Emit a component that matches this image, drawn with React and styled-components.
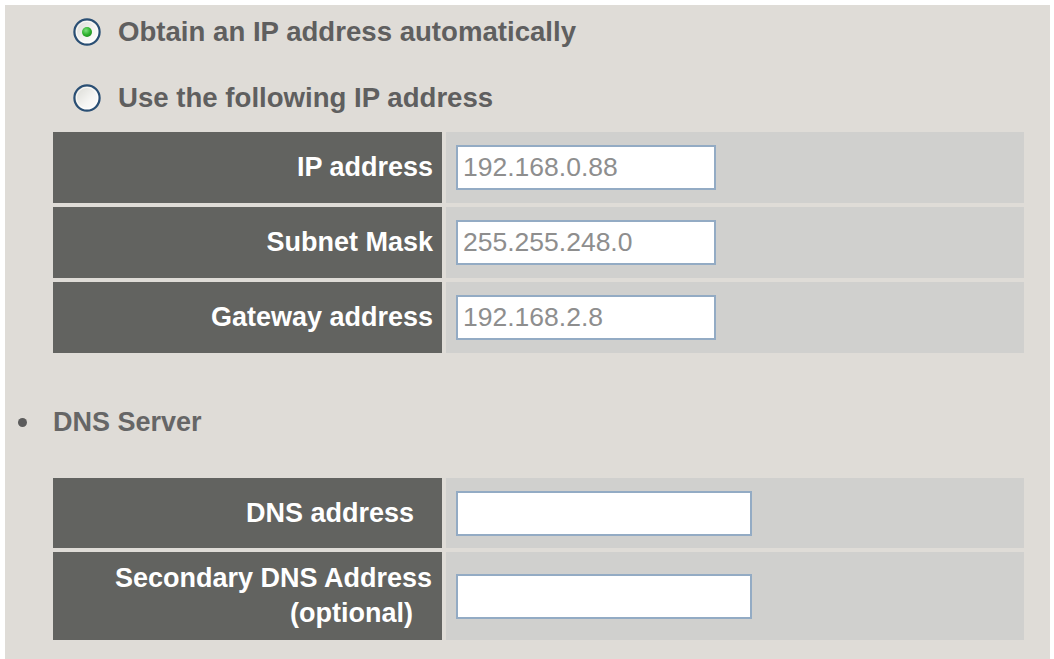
import styled, { createGlobalStyle } from 'styled-components';

const GlobalStyle = createGlobalStyle`
  html, body {
    margin: 0;
    padding: 0;
    background: #ffffff;
  }
  body {
    font-family: "Liberation Sans", Arial, sans-serif;
  }
`;

/** 라디오 버튼 (XP 스타일)
 * @params (bool)checked - 선택 여부
 */
function Radio({ checked }) {
  return (
    <SRadio width="28" height="28" viewBox="0 0 28 28">
      <defs>
        <linearGradient id="radioFace" x1="0" y1="0" x2="1" y2="1">
          <stop offset="0" stopColor="#d8d8d2" />
          <stop offset="0.6" stopColor="#f6f6f4" />
          <stop offset="1" stopColor="#ffffff" />
        </linearGradient>
        <radialGradient id="radioDot" cx="0.4" cy="0.35" r="0.7">
          <stop offset="0" stopColor="#7fe07f" />
          <stop offset="0.6" stopColor="#2fb32f" />
          <stop offset="1" stopColor="#1f8a1f" />
        </radialGradient>
      </defs>
      <circle cx="14" cy="14" r="12.6" fill="url(#radioFace)" stroke="#2a4f74" strokeWidth="2.2" />
      <circle cx="14" cy="14" r="10.6" fill="none" stroke="#ffffff" strokeWidth="1" opacity="0.8" />
      {checked && <circle cx="14" cy="14" r="5" fill="url(#radioDot)" />}
    </SRadio>
  );
}

/** 입력 행
 * @params (string)label - 항목 이름
 * @params (string)value - 입력값
 * @params (number)width - 입력칸 너비
 */
function FieldRow({ label, value = '', width = 260, pad = 9 }) {
  return (
    <>
      <SLabelCell pad={pad}>{label}</SLabelCell>
      <SValueCell>
        <STextField readOnly value={value} width={width} />
      </SValueCell>
    </>
  );
}

function App() {
  return (
    <>
      <GlobalStyle />
      <SPanel>
        <SOptionRow>
          <Radio checked />
          <SOptionText>Obtain an IP address automatically</SOptionText>
        </SOptionRow>
        <SOptionRow gap={12}>
          <Radio />
          <SOptionText>Use the following IP address</SOptionText>
        </SOptionRow>

        <SFormTable top={7} rows="71px 71px 71px">
          <FieldRow label="IP address" value="192.168.0.88" />
          <FieldRow label="Subnet Mask" value="255.255.248.0" />
          <FieldRow label="Gateway address" value="192.168.2.8" />
        </SFormTable>

        <SSectionRow>
          <SBullet />
          <SSectionText>DNS Server</SSectionText>
        </SSectionRow>

        <SFormTable top={29} rows="70px 88px">
          <FieldRow label="DNS address" width={296} pad={28} />
          <FieldRow
            label={
              <span>
                Secondary DNS Address
                <SNote>(optional)</SNote>
              </span>
            }
            width={296}
            pad={10}
          />
        </SFormTable>
      </SPanel>
    </>
  );
}

const SPanel = styled.div`
  margin: 5px 4px 0 5px;
  min-height: calc(100vh - 5px);
  background: #dfdcd7;
  display: flex;
  flex-direction: column;
  box-sizing: border-box;
  padding-bottom: 18px;
`;

const SOptionRow = styled.div`
  display: flex;
  align-items: center;
  gap: 17px;
  height: 54px;
  padding-left: 68px;
  margin-top: ${({ gap = 0 }) => gap}px;
`;

const SRadio = styled.svg`
  flex: none;
  display: block;
`;

const SOptionText = styled.span`
  font-size: 27.6px;
  font-weight: bold;
  color: #5f5f5f;
  white-space: nowrap;
`;

const SFormTable = styled.div`
  display: grid;
  grid-template-columns: 389px 1fr;
  grid-template-rows: ${({ rows }) => rows};
  gap: 4px;
  margin: ${({ top }) => top}px 26px 0 48px;
`;

const SLabelCell = styled.div`
  display: flex;
  align-items: center;
  justify-content: flex-end;
  text-align: right;
  padding-right: ${({ pad }) => pad}px;
  background: #626360;
  color: #ffffff;
  font-size: 27px;
  font-weight: bold;
  line-height: 35px;
`;

const SNote = styled.span`
  display: block;
  margin-right: 19px;
`;

const SValueCell = styled.div`
  display: flex;
  align-items: center;
  padding-left: 10px;
  background: #d0d0ce;
`;

const STextField = styled.input`
  box-sizing: border-box;
  width: ${({ width }) => width}px;
  height: 45px;
  margin: 0;
  padding: 0 5px;
  border: 2px solid #93abc4;
  background: #ffffff;
  font-family: "Liberation Sans", Arial, sans-serif;
  font-size: 26.5px;
  color: #8e8e8e;
  outline: none;
`;

const SSectionRow = styled.div`
  display: flex;
  align-items: center;
  height: 54px;
  margin-top: 42px;
  padding-left: 13px;
  gap: 26px;
`;

const SBullet = styled.span`
  flex: none;
  width: 9px;
  height: 9px;
  border-radius: 50%;
  background: #5c5c5c;
`;

const SSectionText = styled.span`
  font-size: 27px;
  font-weight: bold;
  color: #666666;
`;

export default App;
